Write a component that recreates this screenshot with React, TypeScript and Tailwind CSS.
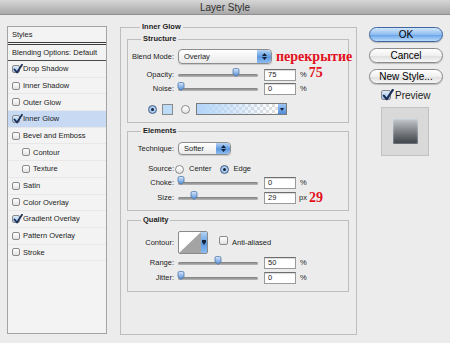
import { FC, ReactNode } from 'react';

const Check: FC<{ checked?: boolean; size?: number }> = ({ checked, size = 8 }) => (
  <span
    className={`relative inline-block shrink-0 rounded-[2px] border border-[#8a8a8a] ${
      checked ? 'bg-[linear-gradient(#dcebfb,#9cc3ee)]' : 'bg-[linear-gradient(#ffffff,#e2e2e2)]'
    }`}
    style={{ width: size, height: size }}
  >
    {checked && (
      <svg
        viewBox="0 0 10 10"
        className="absolute left-[0px] top-[-2px]"
        style={{ width: size + 2, height: size + 2 }}
      >
        <path d="M1.5 5.5 L4 8.5 L9 0.8" fill="none" stroke="#1d2f57" strokeWidth="1.8" strokeLinecap="round" strokeLinejoin="round" />
      </svg>
    )}
  </span>
);

const Radio: FC<{ on?: boolean }> = ({ on }) => (
  <span
    className={`flex h-[9px] w-[9px] shrink-0 items-center justify-center rounded-full border ${
      on ? 'border-[#4a5f80] bg-[radial-gradient(circle,#cfe3fa,#7fb0e8)]' : 'border-[#8a8a8a] bg-[linear-gradient(#ffffff,#e4e4e4)]'
    }`}
  >
    {on && <span className="h-[3px] w-[3px] rounded-full bg-[#14213a]" />}
  </span>
);

const Stepper: FC = () => (
  <span className="flex h-full w-[14px] shrink-0 flex-col items-center justify-center gap-[1px] rounded-r-[4px] bg-[linear-gradient(#b5d4f5,#5c98e0_55%,#8dbdf0)]">
    <svg width="5" height="3" viewBox="0 0 5 3"><path d="M0 3 L2.5 0 L5 3Z" fill="#14213a" /></svg>
    <svg width="5" height="3" viewBox="0 0 5 3"><path d="M0 0 L2.5 3 L5 0Z" fill="#14213a" /></svg>
  </span>
);

const Select: FC<{ value: string; w: string; h: string }> = ({ value, w, h }) => (
  <div
    className={`ml-[4px] flex shrink-0 items-center overflow-hidden rounded-[4px] border border-[#8d8d8d] bg-[linear-gradient(#ffffff,#e9e9e9)] shadow-[0_1px_1px_rgba(0,0,0,0.15)] ${w} ${h}`}
  >
    <span className="flex-1 pl-[5px]">{value}</span>
    <Stepper />
  </div>
);

const Slider: FC<{ pct: number }> = ({ pct }) => (
  <div className="relative ml-[4px] h-[12px] w-[80px] shrink-0">
    <div className="absolute left-0 right-0 top-[5px] h-[3px] rounded-full bg-[linear-gradient(#7d7d7d,#b8b8b8)]" />
    <svg
      width="8"
      height="9"
      viewBox="0 0 8 9"
      className="absolute top-[-1px]"
      style={{ left: 3 + pct * 73 - 4 }}
    >
      <defs>
        <linearGradient id="th" x1="0" y1="0" x2="0" y2="1">
          <stop offset="0" stopColor="#d6e8fc" />
          <stop offset="1" stopColor="#4d8ad6" />
        </linearGradient>
      </defs>
      <path d="M1 2 Q1 0.5 2.5 0.5 H5.5 Q7 0.5 7 2 V5.5 L4 8.5 L1 5.5 Z" fill="url(#th)" stroke="#3f6aa3" strokeWidth="0.7" />
    </svg>
  </div>
);

const NumBox: FC<{ value: string }> = ({ value }) => (
  <div className="ml-[6px] h-[12px] w-[32px] shrink-0 border border-[#9a9a9a] border-t-[#6e6e6e] bg-white pl-[3px] leading-[10px] shadow-[inset_0_1px_1px_rgba(0,0,0,0.15)]">
    {value}
  </div>
);

const Label: FC<{ children: ReactNode }> = ({ children }) => (
  <span className="w-[46px] shrink-0 text-right">{children}</span>
);

const Red: FC<{ children: ReactNode; className?: string }> = ({ children, className = '' }) => (
  <span
    className={`shrink-0 whitespace-nowrap text-[14px] font-bold leading-none text-[#e3101c] ${className}`}
    style={{ fontFamily: '"Liberation Serif", "DejaVu Serif", serif' }}
  >
    {children}
  </span>
);

const Box: FC<{ title: string; className?: string; children: ReactNode }> = ({ title, className = '', children }) => (
  <fieldset className={`min-w-0 border border-[#bdbdbd] ${className}`}>
    <legend className="ml-[13px] px-[2px] text-[7.5px] font-bold leading-[12px] text-[#1e1e1e]">{title}</legend>
    {children}
  </fieldset>
);

const styleRows = [
  { name: 'Drop Shadow', checked: true },
  { name: 'Inner Shadow' },
  { name: 'Outer Glow' },
  { name: 'Inner Glow', checked: true, active: true },
  { name: 'Bevel and Emboss' },
  { name: 'Contour', indent: true },
  { name: 'Texture', indent: true },
  { name: 'Satin' },
  { name: 'Color Overlay' },
  { name: 'Gradient Overlay', checked: true },
  { name: 'Pattern Overlay' },
  { name: 'Stroke' },
];

const Button: FC<{ children: ReactNode; primary?: boolean; className?: string }> = ({ children, primary, className = '' }) => (
  <button
    className={`flex h-[15px] w-[74px] items-center justify-center rounded-full border text-[10px] leading-none text-black shadow-[0_1px_1px_rgba(0,0,0,0.2)] ${
      primary
        ? 'border-[#3f669f] bg-[linear-gradient(#d3e6fb,#8fbdf0_50%,#6aa6ea_55%,#b9dafb)]'
        : 'border-[#8a8a8a] bg-[linear-gradient(#ffffff,#f0f0f0_50%,#e0e0e0_55%,#f6f6f6)]'
    } ${className}`}
  >
    {children}
  </button>
);

const App: FC = () => {
  return (
    <div
      className="h-[343px] w-[450px] overflow-hidden bg-[#ececec] text-[7.5px] text-[#1c1c1c]"
      style={{ fontFamily: '"Liberation Sans", Arial, sans-serif' }}
    >
      <div className="flex h-[15px] items-center justify-center border-b border-[#8f8f8f] bg-[linear-gradient(#d6d6d6,#a9a9a9)] text-[10px] text-[#2e2e2e]">
        Layer Style
      </div>

      <div className="flex pl-[7px]">
        {/* styles list */}
        <div className="mt-[11px] h-[308px] w-[100px] shrink-0 border border-[#a3a3a3] bg-[#f3f3f3]">
          <div className="flex h-[18px] items-center border-b-[3px] border-double border-[#3c3c3c] pl-[4px]">Styles</div>
          <div className="flex h-[16px] items-center border-b border-[#4a4a4a] pl-[4px]">Blending Options: Default</div>
          {styleRows.map((r) => (
            <div
              key={r.name}
              className={`flex h-[16.7px] items-center gap-[3px] border-b border-[#e8e8e8] ${r.indent ? 'pl-[14px]' : 'pl-[4px]'} ${
                r.active ? 'bg-[#c8daf3]' : ''
              }`}
            >
              <Check checked={r.checked} />
              <span>{r.name}</span>
            </div>
          ))}
        </div>

        {/* main */}
        <Box title="Inner Glow" className="ml-[13px] mt-[6px] h-[314px] w-[237px] shrink-0 px-[6px]">
          <Box title="Structure" className="mr-[1px] pb-[7px]">
            <div className="mt-[4px] flex h-[15px] items-center">
              <Label>Blend Mode:</Label>
              <Select value="Overlay" w="w-[94px]" h="h-[15px]" />
              <Red className="ml-[4px]">перекрытие</Red>
            </div>
            <div className="mt-[5px] flex h-[12px] items-center">
              <Label>Opacity:</Label>
              <Slider pct={0.75} />
              <NumBox value="75" />
              <span className="ml-[4px]">%</span>
              <Red className="ml-[2px] mt-[-5px]">75</Red>
            </div>
            <div className="mt-[2px] flex h-[12px] items-center">
              <Label>Noise:</Label>
              <Slider pct={0} />
              <NumBox value="0" />
              <span className="ml-[4px]">%</span>
            </div>
            <div className="mt-[8px] flex h-[12px] items-center pl-[20px]">
              <Radio on />
              <span className="ml-[5px] h-[11px] w-[11px] shrink-0 border border-[#8a8a8a] bg-[#bcdcf8]" />
              <span className="ml-[8px]"><Radio /></span>
              <div className="ml-[6px] flex h-[12px] w-[91px] shrink-0 border border-[#7a7a7a] bg-[linear-gradient(to_right,#b2d5fa,rgba(178,213,250,0)_85%),repeating-conic-gradient(#dedede_0_25%,#ffffff_0_50%)] [background-size:100%_100%,6px_6px]">
                <span className="flex-1" />
                <span className="flex w-[8px] items-center justify-center bg-[linear-gradient(#9ec6f2,#4f8bd8)]">
                  <svg width="4" height="3" viewBox="0 0 4 3"><path d="M0 0 L2 3 L4 0Z" fill="#14213a" /></svg>
                </span>
              </div>
            </div>
          </Box>

          <Box title="Elements" className="mr-[1px] mt-[2px] pb-[6px]">
            <div className="mt-[5px] flex h-[13px] items-center">
              <Label>Technique:</Label>
              <Select value="Softer" w="w-[53px]" h="h-[13px]" />
            </div>
            <div className="mt-[9px] flex h-[10px] items-center">
              <Label>Source:</Label>
              <span className="ml-[1px]"><Radio /></span>
              <span className="ml-[5px]">Center</span>
              <span className="ml-[8px]"><Radio on /></span>
              <span className="ml-[5px]">Edge</span>
            </div>
            <div className="mt-[3px] flex h-[12px] items-center">
              <Label>Choke:</Label>
              <Slider pct={0} />
              <NumBox value="0" />
              <span className="ml-[4px]">%</span>
            </div>
            <div className="mt-[3px] flex h-[12px] items-center">
              <Label>Size:</Label>
              <Slider pct={0.18} />
              <NumBox value="29" />
              <span className="ml-[3px]">px</span>
              <Red className="ml-[2px]">29</Red>
            </div>
          </Box>

          <Box title="Quality" className="mr-[1px] mt-[3px] pb-[7px]">
            <div className="mt-[5px] flex h-[23px] items-center">
              <Label>Contour:</Label>
              <div className="ml-[4px] flex h-[23px] w-[30px] shrink-0 overflow-hidden rounded-[2px] border border-[#8a8a8a] bg-white">
                <svg width="22" height="21" viewBox="0 0 22 21" className="shrink-0">
                  <path d="M0 21 L22 0 V21 Z" fill="#a4a4a4" />
                </svg>
                <span className="flex flex-1 items-center justify-center bg-[linear-gradient(#b5d4f5,#5c98e0_55%,#8dbdf0)]">
                  <svg width="4" height="5" viewBox="0 0 4 5"><path d="M0 0 H4 V2 L2 5 L0 2Z" fill="#14213a" /></svg>
                </span>
              </div>
              <span className="ml-[11px]"><Check size={9} /></span>
              <span className="ml-[4px]">Anti-aliased</span>
            </div>
            <div className="mt-[3px] flex h-[12px] items-center">
              <Label>Range:</Label>
              <Slider pct={0.5} />
              <NumBox value="50" />
              <span className="ml-[4px]">%</span>
            </div>
            <div className="mt-[3px] flex h-[12px] items-center">
              <Label>Jitter:</Label>
              <Slider pct={0} />
              <NumBox value="0" />
              <span className="ml-[4px]">%</span>
            </div>
          </Box>
        </Box>

        {/* buttons */}
        <div className="ml-[12px] mt-[12px] flex w-[74px] shrink-0 flex-col">
          <Button primary>OK</Button>
          <Button className="mt-[6px]">Cancel</Button>
          <Button className="mt-[6px]">New Style...</Button>
          <div className="ml-[12px] mt-[5px] flex h-[12px] items-center gap-[4px] text-[10px]">
            <Check checked size={10} />
            <span>Preview</span>
          </div>
          <div className="ml-[12px] mt-[6px] flex h-[49px] w-[48px] items-center justify-center border border-[#c2c2c2] bg-[#d9d9d9]">
            <div className="h-[25px] w-[25px] bg-[linear-gradient(#c4c8cc,#7d8084_50%,#3b3e43)] shadow-[inset_0_0_2px_#d8ecff]" />
          </div>
        </div>
      </div>
    </div>
  );
};

export default App;
